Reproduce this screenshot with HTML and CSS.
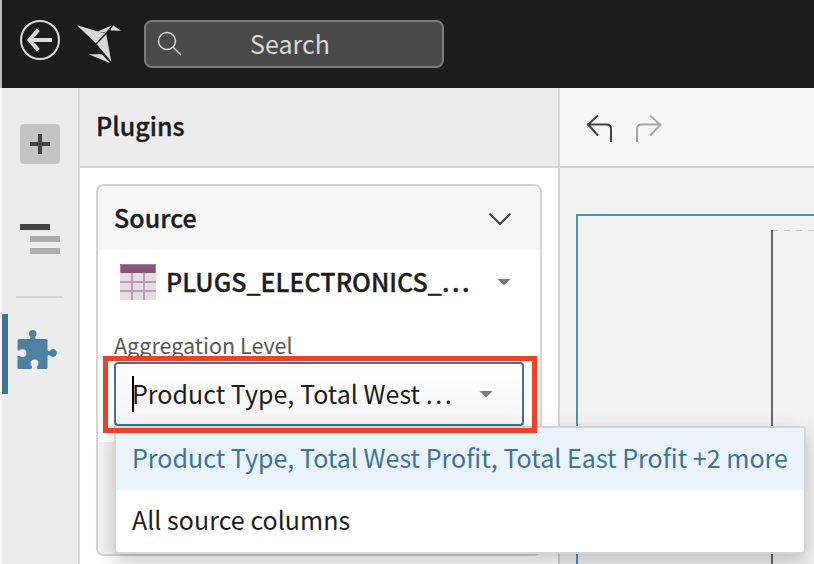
FILE: index.html
```html
<!DOCTYPE html>
<html lang="en">
<head>
<meta charset="utf-8">
<title>Plugins</title>
<link rel="stylesheet" href="styles.css">
</head>
<body>
<div class="app">
  <header class="topbar">
    <svg class="back" width="40" height="40" viewBox="0 0 40 40" fill="none" stroke="#d9d9d9">
      <circle cx="20" cy="20" r="19" stroke-width="2"/>
      <path d="M32 20H10M18.300 9.700L9.500 20L18.300 30.300" stroke-width="4"/>
    </svg>
    <svg class="logo" width="46" height="40" viewBox="76 24 46 40" fill="#d9d9d9">
      <path d="M77 25.200L105 33.600L95.800 43.200Z"/>
      <path d="M97.500 31.500L111.800 25.600L105.600 32.800Z"/>
      <path d="M113 25.200L121 30.700L110.300 30.500Z"/>
      <path d="M96.700 44.200L106.300 34.500L111.300 61.500Z"/>
      <path d="M88.500 54.300H102L110 63Z"/>
    </svg>
    <div class="search">
      <svg width="26" height="26" viewBox="0 0 26 26" fill="none" stroke="#d9d9d9" stroke-width="1.500">
        <circle cx="10" cy="10" r="8.500"/><path d="M16 16L24 24"/>
      </svg>
      <span>Search</span>
    </div>
  </header>
  <div class="main">
    <nav class="rail">
      <div class="add"><svg width="20" height="20" viewBox="0 0 20 20" stroke="#444" stroke-width="4"><path d="M0 10H20M10 0V20"/></svg></div>
      <svg class="outline" width="40" height="30" viewBox="0 0 40 30"><path fill="#444" d="M0 0H30V6H0Z"/><path fill="#adadad" d="M10 12H40V18H10ZM10 24H40V30H10Z"/></svg>
      <hr class="rule">
      <div class="active">
        <svg width="40" height="40" viewBox="0 0 40 40" fill="#4e81a0"><path d="M2 9H12Q13.700 9 13.500 7Q12 6 12 3.800A3.800 3.800 0 0 1 19.600 3.800Q19.600 6 18 7Q18 9 19.500 9H29Q30.500 9 30.500 10.500V19.500Q30.700 22 33 20.500A3.900 3.900 0 1 1 33 25.500Q30.700 24 30.500 26.500V37.500Q30.500 39 29 39H21Q20 39 20 38V36.500Q21.500 35.500 21.500 33.500A4 4 0 0 0 13.500 33.500Q13.500 35.500 15 36.500V38Q15 39 14 39H2Q0.500 39 0.500 37.500V26H2.500Q3.500 27 5.500 27A3.900 3.900 0 0 0 5.500 19.200Q3.500 19.200 2.500 20.500H0.500V10.500Q0.500 9 2 9Z"/></svg>
      </div>
    </nav>
    <section class="panel">
      <h1 class="panel-title"><span>Plugins</span></h1>
      <div class="card">
        <h2 class="card-head"><span>Source</span>
          <svg width="24" height="14" viewBox="0 0 24 14" fill="none" stroke="#444" stroke-width="2"><path d="M1.500 1.500L12 12L22.500 1.500"/></svg>
        </h2>
        <div class="source">
          <svg width="36" height="36" viewBox="0 0 36 36"><path fill="#e7dbe4" d="M0 0H36V36H0Z"/><path fill="#bd9cb5" d="M0 17H36V19H0ZM0 26H36V28H0ZM11 8H13V36H11ZM23 8H25V36H23Z"/><path fill="#8b5379" d="M0 0H36V9H0Z"/><path d="M.5 9V.5H35.500V9" fill="none" stroke="#a981a0"/></svg>
          <span class="source-name">PLUGS_ELECTRONICS_<span class="dots">...</span></span>
          <i class="caret"></i>
        </div>
        <div class="label"><span>Aggregation Level</span></div>
        <div class="field">
          <div class="select"><i class="cursor"></i><span class="value">Product Type, Total West <span class="dots">...</span></span><i class="caret"></i></div>
          <div class="menu">
            <div class="option selected"><span>Product Type, Total West Profit, Total East Profit +2 more</span></div>
            <div class="option"><span>All source columns</span></div>
          </div>
          <div class="highlight"></div>
        </div>
        <div class="card-foot"></div>
      </div>
    </section>
    <section class="workspace">
      <div class="toolbar">
        <svg width="26" height="28" viewBox="0 0 26 28" fill="none" stroke="#444" stroke-width="2"><path d="M1 10.500H20.500Q25 10.500 25 15V28M12 1.500L2 10.500L12 21.500"/></svg>
        <svg width="26" height="28" viewBox="0 0 26 28" fill="none" stroke="#a6a6a6" stroke-width="2"><path d="M25 10.500H5.500Q1 10.500 1 15V28M14 1.500L24.500 11L14 21.500"/></svg>
      </div>
      <div class="canvas"><div class="frame"><div class="page">
        <svg width="42" height="1"><path d="M0 .5H42" stroke="#c8c8c8" stroke-dasharray="6" stroke-dashoffset="1"/></svg>
      </div></div></div>
    </section>
  </div>
</div>
</body>
</html>
```
FILE: styles.css
```css
* { box-sizing: border-box; }
body {
  margin: 0;
  overflow: hidden;
  font-family: "Noto Sans CJK SC", sans-serif;
  font-size: 25px;
  line-height: 36px;
  letter-spacing: .03px;
  color: #1c1c1c;
}
svg { display: block; flex: none; }
span { white-space: nowrap; }
.app { width: 814px; height: 564px; overflow: hidden; display: flex; flex-direction: column; }
.topbar {
  height: 88px; flex: none; display: flex; align-items: flex-start;
  background: #1c1c1c; border-left: 2px solid #b9b9b9; padding: 20px 0 0 18px;
}
.logo { margin: 4px 22px 0 16px; }
.search {
  width: 300px; height: 48px; display: flex; align-items: center;
  background: #4a4a4a; border: 2px solid #7b7b7b; border-radius: 8px;
  color: #d9d9d9; padding-left: 11px;
}
.search span { margin-left: 67px; padding-bottom: 2px; }
.main { flex: 1; min-height: 0; display: flex; }
.rail {
  width: 80px; flex: none; background: #ececec;
  border-left: 2px solid #f7f7f7; border-right: 2px solid #d4d4d4; padding-top: 36px;
}
.add {
  width: 40px; height: 40px; margin-left: 18px; border-radius: 4px; background: #c4c4c4;
  display: flex; align-items: center; justify-content: center;
}
.outline { margin: 60px 0 0 18px; }
.rule { width: 46px; height: 2px; border: 0; background: #d4d4d4; margin: 42px 0 16px 14px; }
.active { height: 80px; border-left: 6px solid #3c7597; padding: 16px 0 0 8.500px; }
.panel { width: 480px; flex: none; background: #fff; border-right: 2px solid #d4d4d4; }
.panel-title {
  margin: 0; height: 80px; padding: 19px 0 0 16px; font-size: 25px; font-weight: 500;
  background: #ececec; border-bottom: 2px solid #d4d4d4;
}
.panel-title, .card-head, .source-name { -webkit-text-stroke: .35px #1c1c1c; }
.card {
  width: 446px; height: 372px; margin: 16px 0 0 16px; border: 2px solid #d4d4d4;
  border-radius: 8px; display: flex; flex-direction: column;
}
.card-head {
  margin: 0; height: 64px; flex: none; background: #f7f7f7; border-radius: 6px 6px 0 0;
  display: flex; align-items: center; justify-content: space-between;
  padding: 0 28px 0 16px; font-size: 25px; font-weight: 500;
}
.card-head span, .value { padding-bottom: 2px; }
.card-head svg { margin-top: 2px; }
.source { height: 64px; flex: none; display: flex; align-items: center; padding: 0 29px 0 22px; }
.source-name { margin-left: 10px; flex: 1; font-weight: 500; padding-bottom: 2px; }
.dots { letter-spacing: 2.600px; }
.caret { width: 14px; height: 7px; background: #7b7b7b; clip-path: polygon(0 0, 100% 0, 50% 100%); }
.label { height: 48px; flex: none; padding: 13px 0 0 16px; font-size: 21.500px; color: #585858; }
.field {
  position: relative; height: 80px; flex: none;
  padding-left: 16px; margin-bottom: 16px;
}
.select {
  width: 410px; height: 64px; display: flex; align-items: center;
  border: 2px solid #3c7597; border-radius: 4px; padding: 0 29px 0 16px;
  background: linear-gradient(#fff, #f5f5f5);
}
.cursor { width: 2px; height: 36px; margin-right: -2px; background: #000; }
.value { flex: 1; }
.menu {
  position: absolute; z-index: 2; left: 16px; top: 64px; width: 692px; height: 128px;
  border: 2px solid #d4d4d4; border-radius: 0 4px 4px 4px; background: #fff;
  box-shadow: 0 8px 20px rgba(0, 0, 0, .22);
}
.option { height: 62px; display: flex; align-items: center; padding: 0 0 4px 16px; }
.selected { background: #eaf3f9; color: #3c7597; }
.highlight {
  position: absolute; z-index: 3; left: 5px; top: -6px; width: 434px; height: 77px;
  border: 5px solid #ee4126;
}
.card-foot { flex: 1; background: #f2f2f2; margin-top: -16px; border-radius: 0 0 6px 6px; }
.workspace { flex: 1; min-width: 0; display: flex; flex-direction: column; }
.toolbar {
  height: 80px; flex: none; display: flex; gap: 24px; padding: 26px 0 0 26px;
  background: #f7f7f7; border-bottom: 2px solid #d4d4d4;
}
.canvas { flex: 1; min-height: 0; background: #f2f2f2; padding: 46px 0 0 16px; }
.frame { height: 100%; border: solid #4a92bd; border-width: 2px 0 0 2px; padding: 14px 0 0 193px; }
.page { height: 100%; border-left: 2px solid #666; }
```
